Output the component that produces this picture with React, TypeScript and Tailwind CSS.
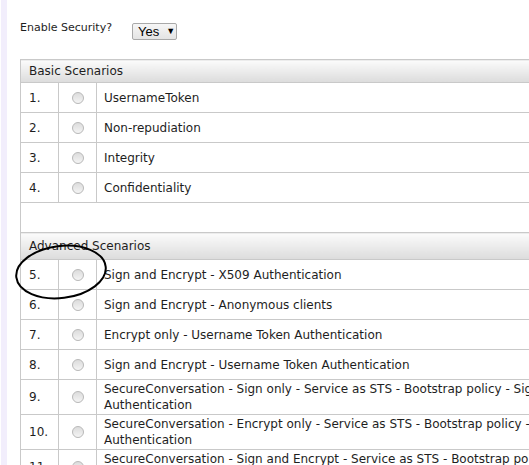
import React from "react";

type Scenario = {
  id: number;
  lines: string[];
};

const basicScenarios: Scenario[] = [
  { id: 1, lines: ["UsernameToken"] },
  { id: 2, lines: ["Non-repudiation"] },
  { id: 3, lines: ["Integrity"] },
  { id: 4, lines: ["Confidentiality"] },
];

const advancedScenarios: Scenario[] = [
  { id: 5, lines: ["Sign and Encrypt - X509 Authentication"] },
  { id: 6, lines: ["Sign and Encrypt - Anonymous clients"] },
  { id: 7, lines: ["Encrypt only - Username Token Authentication"] },
  { id: 8, lines: ["Sign and Encrypt - Username Token Authentication"] },
  {
    id: 9,
    lines: [
      "SecureConversation - Sign only - Service as STS - Bootstrap policy - Sign and Encrypt , X509",
      "Authentication",
    ],
  },
  {
    id: 10,
    lines: [
      "SecureConversation - Encrypt only - Service as STS - Bootstrap policy - Sign and Encrypt , X509",
      "Authentication",
    ],
  },
  {
    id: 11,
    lines: [
      "SecureConversation - Sign and Encrypt - Service as STS - Bootstrap policy - Sign and Encrypt , X509",
      "Authentication",
    ],
  },
];

function Radio() {
  return (
    <span className="mx-auto block h-[12px] w-[12px] rounded-full border border-[#b9b9b9] bg-gradient-to-b from-[#dcdcdc] to-[#f4f4f4]" />
  );
}

function SectionHeader({ title, tall }: { title: string; tall?: boolean }) {
  return (
    <tr className={tall ? "h-[27px]" : "h-[23px]"}>
      <td
        colSpan={3}
        className="border border-[#c9c9c9] bg-gradient-to-b from-[#fbfbfb] to-[#dcdcdc] px-[8px] py-0 align-middle"
      >
        {title}
      </td>
    </tr>
  );
}

function ScenarioRow({ scenario }: { scenario: Scenario }) {
  const multi = scenario.lines.length > 1;
  return (
    <tr className={multi ? "" : "h-[30px]"}>
      <td className="w-[38px] border border-[#c9c9c9] px-[8px] py-px align-middle">
        {scenario.id}.
      </td>
      <td className="w-[38px] border border-[#c9c9c9] p-0 align-middle">
        <Radio />
      </td>
      <td className="border border-[#c9c9c9] px-[7px] py-px align-middle whitespace-nowrap">
        {scenario.lines.map((line, i) => (
          <div key={i}>{line}</div>
        ))}
      </td>
    </tr>
  );
}

export default function App() {
  return (
    <div className="relative flex h-screen w-full overflow-hidden bg-white font-['DejaVu_Sans',sans-serif] text-[11px] leading-[16px] text-[#1e1e1e]">
      <div className="ml-[1px] w-[6px] shrink-0 bg-[#f2eefc]" />

      <div className="pl-[13px] pt-[20px]">
        <div className="flex items-start">
          <span>Enable Security?</span>
          <div className="ml-[20px] mt-[3px] flex h-[17px] w-[45px] items-center rounded-[2px] border border-[#a9a9a9] bg-gradient-to-b from-[#f6f6f6] to-[#e4e4e4] pl-[5px] font-['Liberation_Sans',sans-serif] text-[13px] leading-none text-black">
            Yes
            <span className="ml-[7px] text-[9px]">▼</span>
          </div>
        </div>

        <table className="mt-[19px] w-[780px] table-fixed border-collapse text-[12px] leading-[16px]">
          <colgroup>
            <col className="w-[38px]" />
            <col className="w-[38px]" />
            <col />
          </colgroup>
          <tbody>
            <SectionHeader title="Basic Scenarios" />
            {basicScenarios.map((s) => (
              <ScenarioRow key={s.id} scenario={s} />
            ))}
            <tr className="h-[30px]">
              <td colSpan={3} className="border border-[#c9c9c9]" />
            </tr>
            <SectionHeader title="Advanced Scenarios" tall />
            {advancedScenarios.map((s) => (
              <ScenarioRow key={s.id} scenario={s} />
            ))}
          </tbody>
        </table>
      </div>

      {/* hand-drawn circle around scenario 5 */}
      <svg
        className="pointer-events-none absolute left-0 top-0"
        width="140"
        height="320"
        viewBox="0 0 140 320"
      >
        <ellipse
          cx="61"
          cy="272"
          rx="45"
          ry="26"
          transform="rotate(-7 61 272)"
          fill="none"
          stroke="#000"
          strokeWidth="2"
        />
      </svg>
    </div>
  );
}
